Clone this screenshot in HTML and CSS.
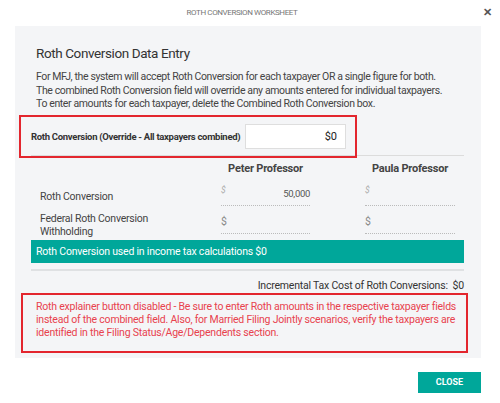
FILE: index.html
```html
<!DOCTYPE html>
<html>
<head>
	<meta charset="utf-8">
	<title>Roth Conversion Worksheet</title>
	<link rel="stylesheet" href="styles.css">
</head>
<body>
	<div class="modal">
		<div class="modal-head">
			<span class="modal-title">ROTH CONVERSION WORKSHEET</span>
			<span class="modal-x">&#x2715;</span>
		</div>
		<div class="panel">
			<h2>Roth Conversion Data Entry</h2>
			<p class="intro">
				For MFJ, the system will accept Roth Conversion for each taxpayer OR a single figure for both.<br>
				The combined Roth Conversion field will override any amounts entered for individual taxpayers.<br>
				To enter amounts for each taxpayer, delete the Combined Roth Conversion box.
			</p>
			<div class="override-row">
				<div class="override-box">
					<label class="override-label">Roth Conversion (Override - All taxpayers combined)</label>
					<div class="override-input">$0</div>
				</div>
			</div>
			<div class="grid">
				<div></div>
				<div class="col-head">Peter Professor</div>
				<div class="col-head">Paula Professor</div>

				<div class="row-label">Roth Conversion</div>
				<div class="field"><span class="cur cur-light">$</span><span class="val">50,000</span></div>
				<div class="field"><span class="cur cur-light">$</span></div>

				<div class="row-label">Federal Roth Conversion<br>Withholding</div>
				<div class="field"><span class="cur">$</span></div>
				<div class="field"><span class="cur">$</span></div>
			</div>
			<div class="used-bar">Roth Conversion used in income tax calculations $0</div>
			<div class="incremental">Incremental Tax Cost of Roth Conversions:&nbsp; $0</div>
			<div class="warn-box">
				Roth explainer button disabled - Be sure to enter Roth amounts in the respective taxpayer fields<br>
				instead of the combined field. Also, for Married Filing Jointly scenarios, verify the taxpayers are<br>
				identified in the Filing Status/Age/Dependents section.
			</div>
		</div>
		<div class="modal-foot">
			<button type="button" class="btn-close">CLOSE</button>
		</div>
	</div>
</body>
</html>
```

FILE: styles.css
```css
* {
	box-sizing: border-box;
}

body {
	margin: 0;
	font-family: Roboto, "Noto Sans", Arial, sans-serif;
	color: #333;
	background: #fff;
}

.modal {
	width: 500px;
	height: 403px;
	position: relative;
	overflow: hidden;
}

.modal-head {
	height: 26px;
	padding-right: 16px;
	text-align: center;
}

.modal-title {
	display: inline-block;
	font-size: 8px;
	letter-spacing: -0.4px;
	color: #777;
	line-height: 26px;
}

.modal-x {
	position: absolute;
	right: 8px;
	top: 6px;
	font-size: 11px;
	font-weight: bold;
	color: #555;
}

.panel {
	margin: 0 19px 0 15px;
	padding: 18px 17px 5px 21px;
	background-color: #f4f5f7;
}

h2 {
	margin: 0;
	font-size: 13.5px;
	letter-spacing: -0.4px;
	font-weight: normal;
	line-height: 18px;
	color: #333;
}

.intro {
	margin: 8px 0 0 0;
	font-size: 10.5px;
	letter-spacing: -0.38px;
	line-height: 13.5px;
	white-space: nowrap;
	color: #444;
}

.override-row {
	margin: 4px 0 0 -5px;
	border-bottom: 1px solid #dcdcdc;
}

.override-box {
	display: flex;
	align-items: center;
	width: 338px;
	height: 43px;
	margin-left: -12px;
	margin-bottom: -3px;
	padding: 0 9px 0 10px;
	border: 2px solid #e3262e;
}

.override-label {
	flex: 1;
	font-size: 9.5px;
	letter-spacing: -0.3px;
	font-weight: bold;
	white-space: nowrap;
	color: #333;
}

.override-input {
	width: 101px;
	height: 25px;
	padding-right: 8px;
	background: #fff;
	border: 1px solid #dedede;
	text-align: right;
	font-size: 11px;
	line-height: 23px;
	color: #222;
}

.grid {
	display: grid;
	grid-template-columns: 181px 89px 145px;
	padding: 6px 0 0 4px;
}

.grid > :nth-child(3n) {
	margin-left: 55px;
}

.col-head {
	text-align: center;
	font-size: 11px;
	letter-spacing: -0.2px;
	line-height: 14px;
	font-weight: bold;
	color: #444;
	padding-bottom: 7px;
}

.row-label {
	font-size: 10.5px;
	letter-spacing: -0.25px;
	line-height: 13px;
	color: #444;
	display: flex;
	align-items: center;
	min-height: 23px;
}

.field {
	display: flex;
	justify-content: space-between;
	align-items: center;
	height: 23px;
	margin-bottom: 5px;
	border-bottom: 1px dotted #bbb;
}

.cur {
	font-size: 10.5px;
	color: #888;
}

.cur-light {
	font-style: italic;
	font-size: 8.5px;
	color: #aaa;
	align-self: flex-start;
	padding-top: 2px;
}

.val {
	font-size: 9.5px;
	letter-spacing: -0.3px;
	color: #555;
}

.used-bar {
	margin: 1px 0 0 -5px;
	height: 23px;
	padding-left: 5px;
	background-color: #00a79a;
	color: #fff;
	font-size: 10.5px;
	letter-spacing: -0.2px;
	line-height: 23px;
}

.incremental {
	margin: 6px 0 0 -5px;
	border-top: 2px solid #dfe1e3;
	padding-top: 8px;
	text-align: right;
	font-size: 10.5px;
	letter-spacing: -0.2px;
	line-height: 14px;
	color: #333;
}

.warn-box {
	margin: 0 -4px 0 -15px;
	padding: 5px 4px 12px 13px;
	border: 2px solid #e3262e;
	color: #e8424e;
	font-size: 10.5px;
	letter-spacing: -0.22px;
	line-height: 13px;
	white-space: nowrap;
}

.modal-foot {
	display: flex;
	justify-content: flex-end;
	padding: 14px 19px 0 0;
}

.btn-close {
	width: 63px;
	height: 21px;
	border: none;
	background-color: #00a79a;
	color: #fff;
	font-family: Roboto, sans-serif;
	font-size: 9px;
	font-weight: bold;
	padding: 0;
}
```
